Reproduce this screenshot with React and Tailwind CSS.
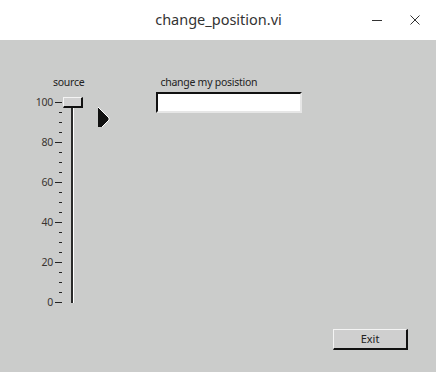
export default function App() {
  const labels = ['100', '80', '60', '40', '20', '0']

  return (
    <div className="w-[436px] h-[372px] flex flex-col bg-white" style={{ fontFamily: '"Noto Sans", sans-serif' }}>
      {/* Title bar */}
      <div className="h-10 relative flex items-center justify-center bg-white">
        <span className="text-[14.5px] text-[#333] pl-px">change_position.vi</span>
        <div className="absolute right-0 top-0 h-10 flex items-center">
          <div className="w-[38px] flex justify-center">
            <div className="w-[10px] h-px bg-[#333]" />
          </div>
          <div className="w-[38px] flex justify-center mr-[2px]">
            <svg width="10" height="10" viewBox="0 0 10 10">
              <path d="M0.5 0.5 L9.5 9.5 M9.5 0.5 L0.5 9.5" stroke="#333" strokeWidth="1" />
            </svg>
          </div>
        </div>
      </div>

      {/* Front panel */}
      <div className="flex-1 bg-[#cbcccb] flex flex-col text-[#222]">
        <div className="flex items-start pl-[33px] pt-[36px]">
          {/* Slider */}
          <div className="flex flex-col">
            <div className="text-[10.5px] leading-[12px] pl-[20px] tracking-tight">source</div>
            <div className="flex items-start mt-[8px]">
              <div className="w-[20px] h-[212px] flex flex-col justify-between items-end text-[10.5px] leading-[12px] text-[#3a3430] tracking-tight">
                {labels.map(l => (
                  <span key={l}>{l}</span>
                ))}
              </div>
              <svg width="10" height="212" viewBox="0 0 10 212" className="shrink-0">
                {Array.from({ length: 21 }).map((_, i) => {
                  const y = 6.5 + i * 10
                  const major = i % 4 === 0
                  return (
                    <line key={i} x1={major ? 2 : 6} x2="9" y1={y} y2={y} stroke="#222" strokeWidth="1" />
                  )
                })}
              </svg>
              <div className="flex flex-col mt-px">
                <div className="w-[20px] h-[11px] bg-[#d2d2d2] border-t border-l border-t-[#f4f4f4] border-l-[#f4f4f4] border-b-2 border-r-2 border-b-[#111] border-r-[#111]" />
                <div className="ml-[8px] w-[3px] h-[195px] bg-[#2a2a2a] border-r border-r-white" />
              </div>
            </div>
          </div>

          {/* Pointer */}
          <svg width="14" height="22" viewBox="0 0 14 22" className="ml-[13px] mt-[30px] shrink-0">
            <polygon points="1,1 12,12 12,14 5,21 1,21" fill="#111" />
            <polyline points="1,1 12,12 12,14 5,21" fill="none" stroke="#fff" strokeWidth="1" />
          </svg>

          {/* String control */}
          <div className="flex flex-col ml-[45px]">
            <div className="text-[10.5px] leading-[12px] pl-[4px] tracking-tight text-[#222]">change my posistion</div>
            <div className="mt-[4px] w-[146px] h-[21px] bg-white border-t-2 border-l-2 border-t-[#111] border-l-[#111] border-b-2 border-r-2 border-b-[#e6e6e6] border-r-[#e6e6e6]" />
          </div>
        </div>

        {/* Exit */}
        <div className="mt-auto flex justify-end pr-[28px] pb-[22px]">
          <button className="w-[75px] h-[21px] flex items-center justify-center bg-[#cfcfcf] border-t border-l border-t-[#f4f4f4] border-l-[#f4f4f4] border-b-2 border-r-2 border-b-[#111] border-r-[#111] text-[11px] text-[#222]">
            Exit
          </button>
        </div>
      </div>
    </div>
  )
}
